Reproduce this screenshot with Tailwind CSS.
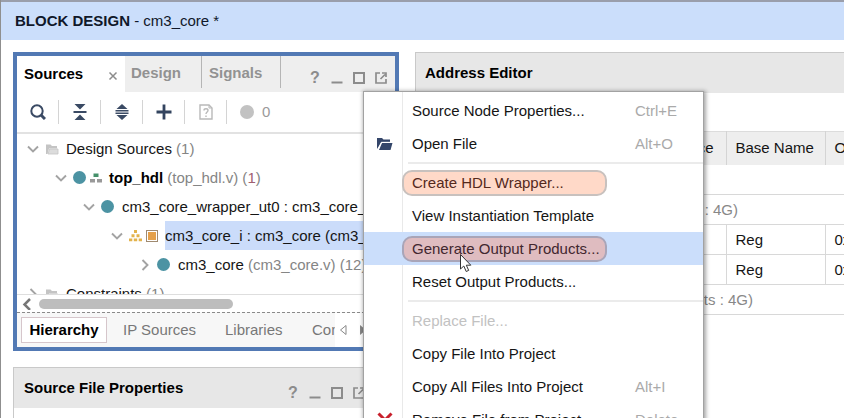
<!DOCTYPE html>
<html lang="en">
<head>
    <meta charset="UTF-8">
    <meta name="viewport" content="width=device-width, initial-scale=1.0">
    <title>Block Design - cm3_core</title>
    <script src="https://cdn.jsdelivr.net/npm/@tailwindcss/browser@4"></script>
</head>
<body class="h-screen overflow-hidden flex flex-col bg-white border-l border-[#8f8f8f] font-['Liberation_Sans',Arial,sans-serif] text-[15px] leading-5 text-[#151515]">

    <!-- Shared icons -->
    <svg class="hidden">
        <symbol id="down" viewBox="0 0 12 12"><path d="M1 3.500L6 8.500l5-5" fill="none" stroke="#a3a3a3" stroke-width="1.900"/></symbol>
        <symbol id="right" viewBox="0 0 12 12"><path d="M3.500 1L8.500 6l-5 5" fill="none" stroke="#a3a3a3" stroke-width="1.900"/></symbol>
        <symbol id="folder" viewBox="0 0 14 14"><path d="M1 12V2.500h4.500L7 4h5v2.500H4L2.500 12z" fill="#c4c4c4"/><path d="M3 12l1.500-5H13v5z" fill="#dcdcdc" stroke="#c4c4c4" stroke-width=".8"/></symbol>
        <symbol id="square" viewBox="0 0 12 12"><rect x="1" y="1" width="10" height="10" fill="none" stroke="#8c8c8c" stroke-width="2"/></symbol>
        <symbol id="popout" viewBox="0 0 12 12"><path d="M5 1H1v10h10V7M5.500 7l4.500-4.500M7 1h4v4" fill="none" stroke="#8c8c8c" stroke-width="1.700"/></symbol>
        <symbol id="minimize" viewBox="0 0 12 12"><path d="M.5 10.500h11" stroke="#8c8c8c" stroke-width="2"/></symbol>
    </svg>

    <header class="border-t-2 border-[#9a9eab] bg-[#cbdefb] h-10 shrink-0 flex items-center px-3.5">
        <h1 class="text-[#10182a]"><b>BLOCK DESIGN</b> - cm3_core *</h1>
    </header>

    <main class="flex-1 min-h-0 flex gap-4 pl-3 pt-3">
        <div class="w-[386px] shrink-0 flex flex-col gap-4">

            <!-- Sources panel -->
            <section class="border-4 border-[#5279b4] shrink-0">
                <div class="flex h-9 bg-[#eeeeee] font-bold text-[#929292]">
                    <button class="w-[108px] bg-white pl-[7px] pr-[6px] flex items-center justify-between text-black">Sources
                        <svg class="size-3 mt-1" viewBox="0 0 12 12"><path d="M2.500 2.500l7 7m0-7l-7 7" stroke="#8c8c8c" stroke-width="1.500"/></svg>
                    </button>
                    <button class="w-[77px] h-8 pl-1.5 pt-0.5 text-left border-r border-[#b5b5b5]">Design</button>
                    <button class="w-[79px] h-8 pl-[7px] pt-0.5 text-left border-r border-[#b5b5b5]">Signals</button>
                    <div class="flex-1 flex items-center justify-end gap-2.5 pr-2 pt-2">
                        <button aria-label="Help" class="w-3 text-base text-[#8c8c8c]">?</button>
                        <button aria-label="Minimize"><svg class="size-3"><use href="#minimize"/></svg></button>
                        <button aria-label="Maximize"><svg class="size-3"><use href="#square"/></svg></button>
                        <button aria-label="Float"><svg class="size-3"><use href="#popout"/></svg></button>
                    </div>
                </div>

                <!-- Toolbar -->
                <div class="flex items-center h-[42px] border-b-2 border-[#e2e2e2]">
                    <button aria-label="Search" class="w-[42px] h-6 flex items-center justify-center border-r border-[#d4d4d4]">
                        <svg class="size-4" viewBox="0 0 16 16"><circle cx="7" cy="7" r="5.700" fill="none" stroke="#3a4a64" stroke-width="2"/><path d="M11 11l4 4" stroke="#3a4a64" stroke-width="3"/></svg>
                    </button>
                    <button aria-label="Collapse all" class="w-[42px] h-6 flex items-center justify-center border-r border-[#d4d4d4]">
                        <svg class="size-4" viewBox="0 0 16 16" fill="#3a4a64"><path d="M2.500 0h11L8 5.500zM2.500 16h11L8 10.500zM1.500 7h13v2h-13z"/></svg>
                    </button>
                    <button aria-label="Expand all" class="w-[42px] h-6 flex items-center justify-center border-r border-[#d4d4d4]">
                        <svg class="size-4" viewBox="0 0 16 16" fill="#3a4a64"><path d="M2.500 5h11L8 0zM2.500 11h11L8 16zM1.500 6h13v1.400h-13zM1.500 8.600h13V10h-13z"/></svg>
                    </button>
                    <button aria-label="Add sources" class="w-[42px] h-6 flex items-center justify-center border-r border-[#d4d4d4]">
                        <svg class="size-4" viewBox="0 0 16 16"><path d="M8 .5v15M.5 8h15" stroke="#33445f" stroke-width="2.800"/></svg>
                    </button>
                    <button aria-label="File help" class="w-[42px] h-6 flex items-center justify-center border-r border-[#d4d4d4]">
                        <svg class="size-4" viewBox="0 0 16 16" fill="none" stroke="#b9b9b9"><path d="M2 1h9l3 3v11H2z" stroke-width="1.400"/><path d="M11 1v3h3" /><path d="M6 6.500c0-2.300 4-2.300 4 0 0 1.500-2 1.500-2 3.500M8 11.500v1.500" stroke-width="1.400"/></svg>
                    </button>
                    <span class="ml-[13px] size-3.5 rounded-full bg-[#c2c2c2]"></span>
                    <span class="ml-2 text-[#9a9a9a]">0</span>
                </div>

                <!-- Source tree -->
                <ul class="h-[160px] overflow-hidden whitespace-nowrap">
                    <li class="flex items-center h-[29px] pl-2.5">
                        <svg class="size-3 mr-1.5"><use href="#down"/></svg>
                        <svg class="size-3.5 mr-[7px]"><use href="#folder"/></svg>
                        <span>Design Sources <span class="text-[#858585]">(1)</span></span>
                    </li>
                    <li class="flex items-center h-[29px] pl-[38px]">
                        <svg class="size-3 mr-1.5"><use href="#down"/></svg>
                        <span class="size-[13px] rounded-full bg-[#4c93a3] mr-1"></span>
                        <svg class="size-3 mr-[7px]" viewBox="0 0 12 12"><path d="M3.500 1.500h5V5h-5z" fill="#45906a"/><path d="M0 7h5v3.500H0zM7 7h5v3.500H7z" fill="#999"/></svg>
                        <span><b class="text-black">top_hdl</b> <span class="text-[#858585]">(top_hdl.v) (<span class="text-[#a06070]">1</span>)</span></span>
                    </li>
                    <li class="flex items-center h-[29px] pl-[66px]">
                        <svg class="size-3 shrink-0 mr-1.5"><use href="#down"/></svg>
                        <span class="size-[13px] shrink-0 rounded-full bg-[#4c93a3] mr-2"></span>
                        <span>cm3_core_wrapper_ut0 : cm3_core_</span>
                    </li>
                    <li class="flex items-center h-[29px] pl-[94px]">
                        <svg class="size-3 shrink-0 mr-1.5"><use href="#down"/></svg>
                        <svg class="size-[13px] shrink-0 mr-1" viewBox="0 0 13 13" fill="#e3b34c"><path d="M5 1h3v3H5zM2.500 5.200h3v3h-3zM7.500 5.200h3v3h-3zM0 9.400h3.300v2.800H0zM4.800 9.400h3.400v2.800H4.800zM9.700 9.400H13v2.800H9.700z"/></svg>
                        <span class="size-3 shrink-0 border border-[#a08a70] bg-white p-px mr-[7px]"><span class="block size-full bg-[#e5a04a]"></span></span>
                        <span class="flex-1 self-stretch flex items-center bg-[#cbdcfa]">cm3_core_i : cm3_core (cm3_</span>
                    </li>
                    <li class="flex items-center h-[29px] pl-[122px]">
                        <svg class="size-3 mr-1.5"><use href="#right"/></svg>
                        <span class="size-[13px] rounded-full bg-[#4c93a3] mr-2"></span>
                        <span>cm3_core <span class="text-[#858585]">(cm3_core.v) (12)</span></span>
                    </li>
                    <li class="flex items-center h-[29px] pl-2.5">
                        <svg class="size-3 mr-1.5"><use href="#right"/></svg>
                        <svg class="size-3.5 mr-[7px]"><use href="#folder"/></svg>
                        <span>Constraints <span class="text-[#858585]">(1)</span></span>
                    </li>
                </ul>
                <div class="flex items-center h-[18px] border-t border-[#dedede] pl-1">
                    <svg class="size-3 mr-1.5" viewBox="0 0 12 12"><path d="M9 1L3.500 6.500 9 12" fill="none" stroke="#777" stroke-width="2.500"/></svg>
                    <div class="h-2.5 w-[194px] rounded-full bg-[#bdbdbd]"></div>
                </div>

                <!-- View tabs -->
                <div class="flex items-center h-[35px] border-t border-dashed border-[#8a8a8a] bg-[#f7f7f7] pl-1 text-[#777] whitespace-nowrap">
                    <button class="h-[26px] w-[86px] border border-[#d6c6cb] bg-white font-bold text-black">Hierarchy</button>
                    <button class="ml-4 w-[72px] text-left">IP Sources</button>
                    <button class="ml-[30px] w-[57px] text-left">Libraries</button>
                    <button class="ml-[30px] w-[23px] overflow-hidden text-left">Compile Order</button>
                    <div class="flex-1 self-stretch flex items-center gap-3 bg-white pl-1">
                        <button aria-label="Previous tab"><svg class="w-2 h-3" viewBox="0 0 8 12"><path d="M7 1.500v9L1.500 6z" fill="#fff" stroke="#888"/></svg></button>
                        <button aria-label="Next tab"><svg class="w-2 h-3" viewBox="0 0 8 12"><path d="M1 1v10l6-5z" fill="#888"/></svg></button>
                    </div>
                </div>
            </section>

            <!-- Source file properties panel -->
            <section class="flex-1 border border-b-0 border-[#c9c9c9]">
                <div class="flex items-center h-10 bg-[#e7e7e7] pl-2.5 pr-[33px]">
                    <h2 class="flex-1 font-bold text-black">Source File Properties</h2>
                    <div class="flex items-center gap-2.5 pt-2.5">
                        <button aria-label="Help" class="w-3 text-base font-bold text-[#8c8c8c]">?</button>
                        <button aria-label="Minimize"><svg class="size-3"><use href="#minimize"/></svg></button>
                        <button aria-label="Maximize"><svg class="size-3"><use href="#square"/></svg></button>
                        <button aria-label="Float"><svg class="size-3"><use href="#popout"/></svg></button>
                    </div>
                </div>
            </section>
        </div>

        <!-- Address editor -->
        <section class="flex-1 min-w-0 border-l border-t border-[#c9c9c9]">
            <h2 class="h-10 flex items-center pl-[9px] bg-[#e7e7e7] font-bold text-black">Address Editor</h2>
            <div class="h-[38px]"></div>
            <table class="w-full table-fixed border-collapse text-left whitespace-nowrap">
                <colgroup><col class="w-[310px]"><col class="w-[99px]"><col></colgroup>
                <thead>
                    <tr class="h-[33px] bg-[#eeeeee] border-t border-[#dcdcdc]">
                        <th class="font-normal text-right pr-3 border-r border-[#d4d4d4]">Interface</th>
                        <th class="font-normal pl-[9px] border-r border-[#d4d4d4]">Base Name</th>
                        <th class="font-normal pl-[9px] overflow-hidden">Offset</th>
                    </tr>
                </thead>
                <tbody>
                    <tr class="h-[30px] border-b border-[#d8d8d8]"><td colspan="3"></td></tr>
                    <tr class="h-[30px] border-b border-[#d8d8d8] text-[#888]"><td colspan="3"><div class="w-[322px] text-right">bits : 4G)</div></td></tr>
                    <tr class="h-[30px] border-b border-[#d8d8d8]"><td class="border-r border-[#d8d8d8]"></td><td class="pl-[9px] border-r border-[#d8d8d8]">Reg</td><td class="pl-[9px] overflow-hidden">0x4000_0000</td></tr>
                    <tr class="h-[30px] border-b border-[#d8d8d8]"><td class="border-r border-[#d8d8d8]"></td><td class="pl-[9px] border-r border-[#d8d8d8]">Reg</td><td class="pl-[9px] overflow-hidden">0x4001_0000</td></tr>
                    <tr class="h-[30px] border-b border-[#d8d8d8] text-[#888]"><td colspan="3"><div class="w-[337px] text-right">bits : 4G)</div></td></tr>
                </tbody>
            </table>
        </section>
    </main>

    <!-- Context menu -->
    <div role="menu" class="absolute left-[363px] top-[91px] w-[341px] border border-[#a2a2a2] bg-white pt-0.5 shadow-[1px_1px_4px_1px_rgba(0,0,0,0.35)]">
        <div class="absolute inset-y-0 left-[38px] w-px bg-[#e9e9e9]"></div>
        <button role="menuitem" class="relative flex items-center w-full h-[33px] pl-12"><span class="w-[223px] text-left">Source Node Properties...</span><span class="text-[#aaa]">Ctrl+E</span></button>
        <button role="menuitem" class="relative flex items-center w-full h-[33px] pl-[13px]">
            <svg class="w-4 h-3.5 mr-[19px]" viewBox="0 0 16 14"><path d="M0 12V1h5l1.500 1.500H13V5H4.500z" fill="#34466a"/><path d="M2 13l3-7h10.500l-2 7z" fill="#34466a"/><path d="M1.800 11L4.300 5.300H14" fill="none" stroke="#fff" stroke-width=".9"/></svg>
            <span class="w-[223px] text-left">Open File</span><span class="text-[#aaa]">Alt+O</span>
        </button>
        <hr class="relative my-0.5 ml-11 border-t-2 border-[#ebebeb]">
        <button role="menuitem" class="relative flex items-center w-full h-[33px] pl-[38px]"><span class="w-[205px] h-[26px] flex items-center pl-2 rounded-[10px] border-2 border-[#c8c1be] bg-[#ffd9c8] text-[#55291c]">Create HDL Wrapper...</span></button>
        <button role="menuitem" class="relative flex items-center w-full h-[33px] pl-12">View Instantiation Template</button>
        <button role="menuitem" class="relative flex items-center w-full h-[33px] pl-[38px] bg-[#cbdefb]"><span class="w-[205px] h-[26px] flex items-center pl-2 rounded-[10px] border-2 border-[#a9a5b8] bg-[#dfbcc0] text-[#42272f]">Generate Output Products...</span></button>
        <button role="menuitem" class="relative flex items-center w-full h-[33px] pl-12">Reset Output Products...</button>
        <hr class="relative my-0.5 ml-11 border-t-2 border-[#ebebeb]">
        <button role="menuitem" disabled class="relative flex items-center w-full h-[33px] pl-12 text-[#c2c2c2]">Replace File...</button>
        <button role="menuitem" class="relative flex items-center w-full h-[33px] pl-12">Copy File Into Project</button>
        <button role="menuitem" class="relative flex items-center w-full h-[33px] pl-12"><span class="w-[223px] text-left">Copy All Files Into Project</span><span class="text-[#aaa]">Alt+I</span></button>
        <button role="menuitem" class="relative flex items-center w-full h-[33px] pl-[13px]">
            <svg class="size-4 mr-[19px]" viewBox="0 0 16 16"><path d="M1.500 1.500l13 13m0-13l-13 13" stroke="#c8202c" stroke-width="3"/></svg>
            <span class="w-[223px] text-left">Remove File from Project</span><span class="text-[#aaa]">Delete</span>
        </button>
    </div>

    <!-- Mouse pointer -->
    <svg class="absolute left-[459px] top-[253px] w-[14px] h-5" viewBox="0 0 14 20"><path d="M1.500 1.500v14.500l3.300-3 2.400 5.500 2.500-1.100-2.400-5.200h4.500z" fill="#fff" stroke="#333"/></svg>
</body>
</html>
